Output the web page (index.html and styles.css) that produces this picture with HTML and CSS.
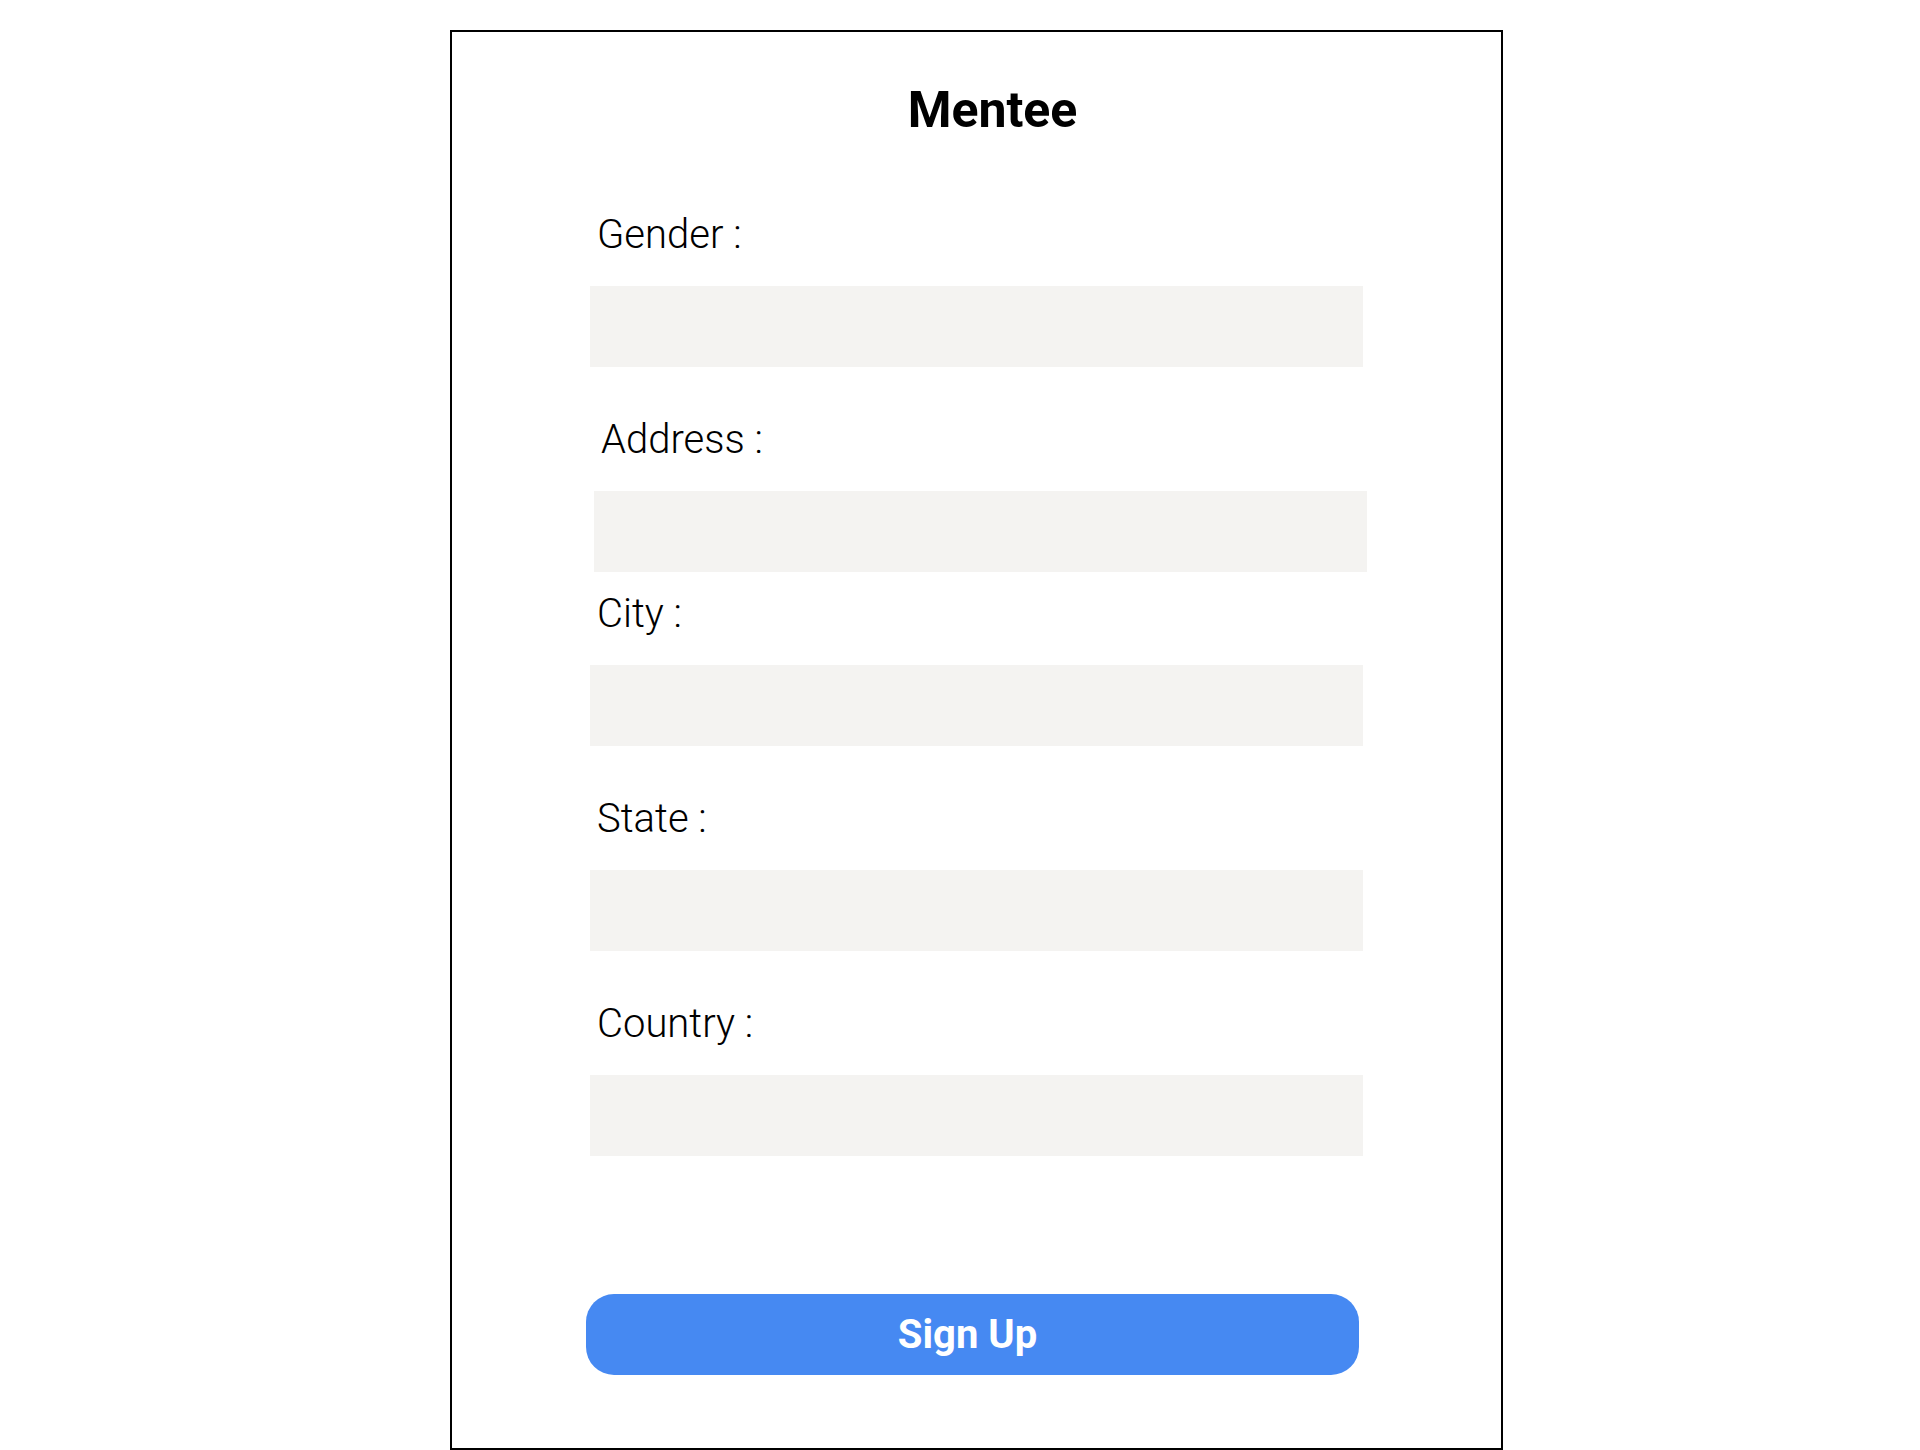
FILE: index.html
```html
<!DOCTYPE html>
<html lang="en">
<head>
<meta charset="utf-8">
<title>Mentee</title>
<link rel="stylesheet" href="styles.css">
</head>
<body>
<main class="card">
  <h1 class="title">Mentee</h1>
  <form class="form">
    <div class="field">
      <label class="label" for="gender">Gender :</label>
      <input class="input" id="gender" type="text">
    </div>
    <div class="field field--shifted">
      <label class="label" for="address">Address :</label>
      <input class="input" id="address" type="text">
    </div>
    <div class="field field--tight">
      <label class="label" for="city">City :</label>
      <input class="input" id="city" type="text">
    </div>
    <div class="field">
      <label class="label" for="state">State :</label>
      <input class="input" id="state" type="text">
    </div>
    <div class="field">
      <label class="label" for="country">Country :</label>
      <input class="input" id="country" type="text">
    </div>
    <button class="button" type="button">Sign Up</button>
  </form>
</main>
</body>
</html>
```

FILE: styles.css
```css
html, body {
  margin: 0;
  padding: 0;
  background: #ffffff;
}

body {
  font-family: Roboto, "Liberation Sans", Arial, sans-serif;
  color: #000000;
  padding-top: 30px;
  height: 1420px;
  overflow: hidden;
}

.card {
  box-sizing: border-box;
  margin-left: 450px;
  width: 1053px;
  height: 1420px;
  border: 2px solid #000000;
  padding-top: 48px;
}

.title {
  margin: 0;
  font-size: 50px;
  line-height: 60px;
  font-weight: 700;
  text-align: center;
  padding-left: 32px;
}

.form {
  display: flex;
  flex-direction: column;
  margin: 0;
  padding-left: 138px;
  padding-top: 70px;
}

.field {
  display: flex;
  flex-direction: column;
  margin-bottom: 48px;
}

.field--shifted {
  margin-left: 4px;
  margin-bottom: 17px;
}

.label {
  display: block;
  font-family: "Roboto Light", Roboto, "Liberation Sans", Arial, sans-serif;
  font-size: 40px;
  line-height: 48px;
  font-weight: 300;
  padding-left: 7px;
  padding-top: 1px;
  margin-bottom: 27px;
}

.input {
  display: block;
  box-sizing: border-box;
  width: 773px;
  height: 81px;
  margin: 0;
  border: none;
  background: #f4f3f1;
  outline: none;
  font-family: inherit;
  font-size: 30px;
  padding: 0 16px;
}

.field:last-of-type {
  margin-bottom: 138px;
}

.button {
  box-sizing: border-box;
  width: 773px;
  height: 81px;
  margin: 0 0 0 -4px;
  border: none;
  border-radius: 28px;
  background: #4689f2;
  color: #ffffff;
  font-family: inherit;
  font-size: 40px;
  font-weight: 700;
  padding: 0 10px 0 0;
  cursor: pointer;
}
```
